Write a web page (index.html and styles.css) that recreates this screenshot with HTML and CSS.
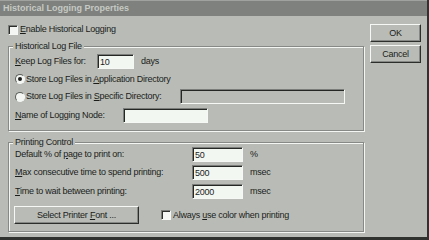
FILE: index.html
```html
<!DOCTYPE html>
<html>
<head>
<meta charset="utf-8">
<link rel="stylesheet" href="styles.css">
</head>
<body>
<div class="window">
  <div class="titlebar">Historical Logging Properties</div>
  <div class="client">
    <div class="main">
      <div class="check-row"><span class="checkbox"></span><span><u>E</u>nable Historical Logging</span></div>
      <div class="group group-log">
        <div class="group-title">Historical Log File</div>
        <div class="row row-keep"><span class="lbl lbl-keep"><u>K</u>eep Log Files for:</span><span class="field field-days">10</span><span class="unit">days</span></div>
        <div class="row row-radio"><span class="radio checked"></span><span>Store Log Files in <u>A</u>pplication Directory</span></div>
        <div class="row row-field"><span class="radio"></span><span class="lbl lbl-dir">Store Log Files in <u>S</u>pecific Directory:</span><span class="field field-dir disabled"></span></div>
        <div class="row row-field"><span class="lbl lbl-node"><u>N</u>ame of Logging Node:</span><span class="field field-node"></span></div>
      </div>
      <div class="group group-print">
        <div class="group-title">Printing Control</div>
        <div class="row row-print first"><span class="lbl lbl-print">Default % of <u>p</u>age to print on:</span><span class="field field-num">50</span><span class="unit">%</span></div>
        <div class="row row-print"><span class="lbl lbl-print"><u>M</u>ax consecutive time to spend printing:</span><span class="field field-num">500</span><span class="unit">msec</span></div>
        <div class="row row-print third"><span class="lbl lbl-print"><u>T</u>ime to wait between printing:</span><span class="field field-num">2000</span><span class="unit">msec</span></div>
        <div class="row row-bottom"><button class="btn btn-font">Select Printer <u>F</u>ont ...</button><span class="checkbox"></span><span>Always <u>u</u>se color when printing</span></div>
      </div>
    </div>
    <div class="buttons">
      <button class="btn btn-side">OK</button>
      <button class="btn btn-side">Cancel</button>
    </div>
  </div>
</div>
</body>
</html>
```
FILE: styles.css
```css
html, body {
  margin: 0;
  padding: 0;
  background: #b9bcb6;
}
body {
  font-family: "Liberation Sans", Arial, sans-serif;
  font-size: 9px;
  line-height: 11px;
  letter-spacing: -0.25px;
  color: #1b1d1b;
}
u { text-decoration: underline; text-underline-offset: 1px; }
.window {
  width: 429px;
  height: 240px;
  box-sizing: border-box;
  background: #b9bcb6;
  border-right: 2px solid #303230;
  border-bottom: 3px solid #303230;
  overflow: hidden;
  display: flex;
  flex-direction: column;
}
.titlebar {
  height: 16px;
  box-sizing: border-box;
  border-top: 1px solid #9fa29e;
  background: #7e817d;
  color: #c6c9c4;
  font-weight: bold;
  letter-spacing: 0;
  line-height: 14px;
  padding-left: 3px;
  flex: none;
}
.client {
  display: flex;
  padding: 8px 0 0 8px;
}
.main {
  width: 356px;
  display: flex;
  flex-direction: column;
}
.check-row {
  height: 11px;
  display: flex;
  align-items: center;
}
.checkbox {
  width: 10px;
  height: 10px;
  box-sizing: border-box;
  background: #f3f6f2;
  border: 1px solid;
  border-color: #7a7d79 #f6f8f5 #f6f8f5 #7a7d79;
  box-shadow: inset 1px 1px 0 #2c2e2c;
  margin-right: 2px;
  flex: none;
}
.group {
  border: 1px solid #868985;
  box-shadow: inset 1px 1px 0 #f4f6f3, 1px 1px 0 #f4f6f3;
  display: flex;
  flex-direction: column;
  padding: 0 0 7px 6px;
}
.group-log { margin-top: 11px; }
.group-print { margin-top: 11px; }
.group-title {
  align-self: flex-start;
  margin: -6px 0 0 -2px;
  padding: 0 2px;
  background: #b9bcb6;
  height: 11px;
}
.row {
  display: flex;
  align-items: center;
  height: 15px;
  margin-top: 4px;
}
.row-keep { margin-top: 2px; }
.row-radio { height: 12px; }
.lbl { flex: none; }
.lbl-keep { width: 82px; }
.lbl-dir { width: 154px; }
.lbl-node { width: 108px; }
.lbl-print { width: 177px; }
.row-print { margin-top: 3px; }
.row-print.first { margin-top: -1px; }
.row-print.third { margin-top: 4px; }
.field {
  height: 15px;
  box-sizing: border-box;
  background: #f3f7f2;
  border: 1px solid;
  border-color: #7a7d79 #f6f8f5 #f6f8f5 #7a7d79;
  box-shadow: inset 1px 1px 0 #252725;
  padding: 1px 0 0 2px;
  line-height: 12px;
  flex: none;
}
.field.disabled { background: #b9bcb6; }
.field-days { width: 37px; }
.field-dir { width: 165px; }
.field-node { width: 85px; }
.field-num { width: 51px; }
.unit { margin-left: 7px; }
.radio {
  width: 10px;
  height: 10px;
  box-sizing: border-box;
  border-radius: 50%;
  border: 1px solid;
  border-color: #5a5d59 #f6f8f5 #f6f8f5 #5a5d59;
  background: #f3f6f2;
  margin-right: 1px;
  flex: none;
  display: flex;
  align-items: center;
  justify-content: center;
}
.radio.checked::after {
  content: "";
  width: 4px;
  height: 4px;
  border-radius: 50%;
  background: #1b1d1b;
}
.btn {
  font: inherit;
  letter-spacing: inherit;
  color: inherit;
  background: #b9bcb6;
  box-sizing: border-box;
  border: 1px solid;
  border-color: #f6f8f5 #2c2e2c #2c2e2c #f6f8f5;
  box-shadow: inset -1px -1px 0 #858884;
  padding: 0;
  margin: 0;
  line-height: 14px;
  text-align: center;
}
.row-bottom {
  height: 18px;
  margin-top: 7px;
}
.btn-font {
  width: 125px;
  height: 18px;
  margin-left: -1px;
  margin-right: 22px;
}
.buttons {
  display: flex;
  flex-direction: column;
  gap: 3px;
  margin-left: 6px;
}
.btn-side {
  width: 51px;
  height: 18px;
}
```
